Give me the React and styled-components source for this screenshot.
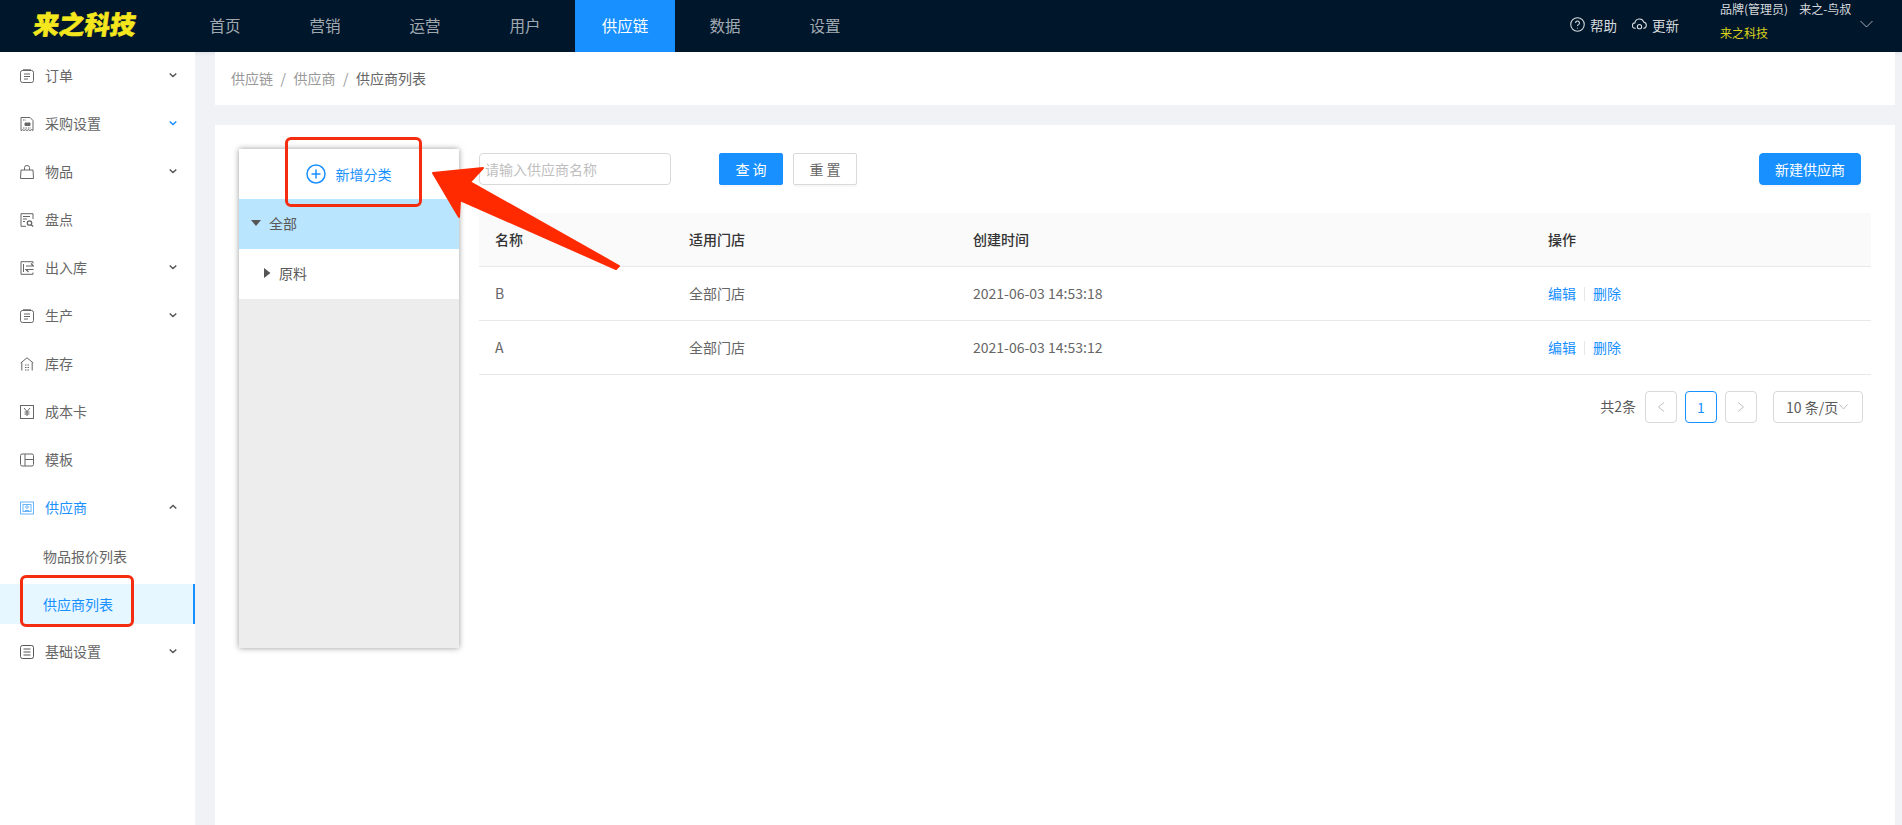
import React from 'react'
import styled, { createGlobalStyle } from 'styled-components'

const GlobalStyle = createGlobalStyle`
html, body {
    margin: 0;
    padding: 0;
    height: 100%;
    overflow: hidden;
    background: #f0f2f5;
    font-family: "Noto Sans CJK SC", "Noto Sans", sans-serif;
    font-size: 14px;
    color: #595959;
}
* { box-sizing: border-box; }
`;

const Page = styled.div`
position: relative;
width: 1902px;
height: 825px;
overflow: hidden;
`;

/* top bar */
const Header = styled.header`
display: flex;
align-items: stretch;
height: 52px;
background: #00162b;
color: rgba(255, 255, 255, 0.65);
box-shadow: 0 1px 4px rgba(0, 21, 41, 0.08);
`;

const Logo = styled.div`
width: 175px;
padding: 0 0 6px 34px;
display: flex;
align-items: center;
font-size: 25.5px;
font-weight: 900;
line-height: 1;
white-space: nowrap;
color: #f5e71d;
span {
    display: inline-block;
    transform: skewX(-8deg);
    -webkit-text-stroke: 0.6px #f5e71d;
}
`;

const TopNav = styled.nav`
display: flex;
`;

const TopNavItem = styled.div`
width: 100px;
display: flex;
align-items: center;
justify-content: center;
padding-bottom: 3px;
font-size: 15.5px;
color: ${p => (p.$active ? '#fff' : 'rgba(255, 255, 255, 0.65)')};
background: ${p => (p.$active ? '#1890ff' : 'transparent')};
`;

const HeaderRight = styled.div`
margin-left: auto;
display: flex;
align-items: center;
padding-right: 29px;
color: rgba(255, 255, 255, 0.85);
`;

const HeaderAction = styled.div`
display: flex;
align-items: center;
gap: 5px;
margin-right: 15px;
font-size: 13.5px;
padding-bottom: 3px;
`;

const UserBlock = styled.div`
width: 140px;
margin-left: 26px;
font-size: 12px;
display: flex;
flex-direction: column;
gap: 8px;
padding-bottom: 11px;
line-height: 16px;
`;

const UserLine = styled.div`
display: flex;
gap: 11px;
white-space: nowrap;
`;

const Company = styled.div`
color: #d8d21c;
`;

const Body = styled.div`
display: flex;
height: 773px;
`;

/* left menu */
const Sidebar = styled.aside`
width: 195px;
flex: none;
background: #fff;
`;

const MenuRow = styled.div`
height: 48px;
display: flex;
align-items: center;
padding: 0 18px 0 20px;
gap: 11px;
color: ${p => (p.$active ? '#1890ff' : '#666')};
`;

const MenuLabel = styled.span`
flex: 1;
line-height: 1;
font-size: 14px;
padding-bottom: 2px;
`;

const SubRow = styled.div`
height: ${p => p.$h}px;
margin-bottom: 4px;
display: flex;
align-items: center;
padding-left: 43px;
padding-bottom: 1px;
color: ${p => (p.$active ? '#1890ff' : '#666')};
background: ${p => (p.$active ? '#e6f7ff' : 'transparent')};
border-right: ${p => (p.$active ? '2px solid #1890ff' : 'none')};
`;

/* content column */
const Content = styled.main`
flex: 1;
min-width: 0;
padding: 0 7px 0 20px;
display: flex;
flex-direction: column;
gap: 20px;
`;

const Crumbs = styled.div`
flex: none;
height: 53px;
background: #fff;
display: flex;
align-items: center;
padding: 0 16px 1px;
color: #999;
`;

const CrumbSep = styled.span`
margin: 0 7.5px;
color: #999;
`;

const CrumbLast = styled.span`
color: #666;
`;

const Card = styled.section`
flex: 1;
background: #fff;
display: flex;
padding: 24px 24px 0;
`;

/* category tree */
const TreePanel = styled.div`
width: 220px;
height: 499px;
flex: none;
display: flex;
flex-direction: column;
background: #ededed;
box-shadow: 0 0 6px rgba(0, 0, 0, 0.4);
`;

const TreeHead = styled.div`
height: 50px;
background: #fff;
display: flex;
align-items: center;
justify-content: center;
gap: 10px;
padding-right: 1px;
color: #1890ff;
font-size: 14px;
`;

const TreeRow = styled.div`
height: 50px;
display: flex;
align-items: center;
gap: ${p => p.$gap}px;
padding-left: ${p => p.$indent}px;
padding-bottom: 2px;
font-size: 14px;
background: ${p => (p.$active ? '#bae5ff' : '#fff')};
`;

/* list side */
const ListPane = styled.div`
flex: 1;
min-width: 0;
margin-left: 20px;
padding-top: 4px;
margin-right: -2px;
`;

const Toolbar = styled.div`
display: flex;
align-items: center;
height: 32px;
margin-bottom: 28px;
`;

const SearchInput = styled.div`
width: 192px;
height: 32px;
border: 1px solid #d9d9d9;
border-radius: 4px;
padding: 0 5px;
display: flex;
align-items: center;
color: #bfbfbf;
font-size: 14px;
`;

const Button = styled.div`
height: 32px;
width: ${p => p.$w}px;
margin-left: ${p => p.$ml || 0}px;
margin-right: ${p => p.$mr || 0}px;
border-radius: ${p => (p.$round ? 4 : 2)}px;
display: flex;
align-items: center;
justify-content: center;
font-size: 14px;
background: ${p => (p.$primary ? '#1890ff' : '#fff')};
color: ${p => (p.$primary ? '#fff' : '#666')};
border: 1px solid ${p => (p.$primary ? '#1890ff' : '#d9d9d9')};
box-shadow: 0 2px 0 rgba(0, 0, 0, 0.03);
`;

const Spacer = styled.div`
flex: 1;
`;

const Table = styled.table`
width: 1392px;
border-collapse: collapse;
table-layout: fixed;
font-size: 14px;
`;

const Th = styled.th`
height: 53px;
padding: 0 16px 1px;
text-align: left;
font-weight: 500;
color: #333;
background: #fafafa;
border-bottom: 1px solid #e8e8e8;
width: ${p => p.$w}px;
`;

const Td = styled.td`
height: 54px;
padding: 0 16px 1px;
color: #666;
border-bottom: 1px solid #e8e8e8;
`;

const TextLink = styled.span`
color: #1890ff;
`;

const LinkDivider = styled.span`
display: inline-block;
width: 1px;
height: 14px;
margin: 0 8px;
vertical-align: -2px;
background: #e8e8e8;
`;

const Pagination = styled.div`
display: flex;
align-items: center;
justify-content: flex-end;
height: 32px;
margin: 16px 10px 0 0;
gap: 8px;
`;

const PageTotal = styled.span`
font-size: 14px;
margin-right: 1px;
padding-bottom: 2px;
`;

const PageBtn = styled.div`
width: 32px;
height: 32px;
display: flex;
align-items: center;
justify-content: center;
border-radius: 4px;
font-size: 14px;
border: 1px solid ${p => (p.$active ? '#1890ff' : '#d9d9d9')};
color: ${p => (p.$active ? '#1890ff' : '#bfbfbf')};
`;

const PageSize = styled.div`
width: 90px;
height: 32px;
margin-left: 8px;
display: flex;
align-items: center;
gap: 1px;
padding: 0 0 0 12px;
border: 1px solid #d9d9d9;
border-radius: 4px;
white-space: nowrap;
`;

/* red marks drawn on top of the screenshot */
const Mark = styled.div`
position: absolute;
left: ${p => p.$x}px;
top: ${p => p.$y}px;
width: ${p => p.$w}px;
height: ${p => p.$h}px;
border: 3px solid #f52d10;
border-radius: 6px;
`;

const ArrowMark = styled.svg`
position: absolute;
left: 0;
top: 0;
pointer-events: none;
`;

const Line = ({ children, size = 14, color = 'currentColor', sw = 1 }) => (
    <svg width={size} height={size} viewBox="0 0 14 14" fill="none" stroke={color} strokeWidth={sw} style={{ flex: 'none' }}>
        {children}
    </svg>
)

const icons = {
    clipboard: <><rect x="0.5" y="1.5" width="13" height="12" rx="2" /><path d="M3 0.8h8M4 5h6M4 7.5h6M4 10h4" /></>,
    receipt: <><path d="M1 .5h9l3 3v10l-1.5-.8-1.5.8-1.5-.8-1.5.8-1.5-.8-1.500.8-1.5-.8L1 13.5z" /><path d="M3 3h3M3 11h8" strokeDasharray="1.5 1" /><path d="M5 6h5v2.5H5z" fill="#666" /></>,
    bag: <><path d="M1 5h12l.5 8.5H.5z" /><path d="M4.5 5V2.5a2.5 2 0 0 1 5 0V5" /></>,
    search: <><path d="M13 6V.7H1v12.600h5" /><path d="M3 3.5h7M3 6h4M3 8.5h2" /><circle cx="9.5" cy="10" r="2.2" strokeWidth="1.3" /><path d="M11.2 11.7l2 1.8" strokeWidth="1.3" /></>,
    inout: <><path d="M13 2.500V.7H1v12.600h12v-1.800" /><path d="M3.5 3v8" /><path d="M6 5h7.500l-2.500-2.500M13.500 8.500H6l2.500 2.500" strokeWidth="1.2" /></>,
    house: <><path d="M.7 6L7 .8 13.3 6M1.8 5.5v8M12.2 5.5v8" /><path d="M5 8h4M5 10.5h4M5 13h4" strokeDasharray="1.5 1" /></>,
    yen: <><rect x="0.5" y="0.5" width="13" height="13" /><path d="M4 3l3 3.5L10 3M7 6.5V11M4.500 7h5M4.500 9h5" /></>,
    layout: <><rect x="0.5" y="1" width="13" height="12" rx="1.5" /><path d="M5 1v12M5 6.500h8.500" /></>,
    vendor: <><rect x="0.5" y="1" width="13" height="12" /><rect x="3" y="3.5" width="8" height="7" /><circle cx="7" cy="6" r="1.3" /><path d="M4.8 9.500h4.400" /></>,
    lines: <><rect x="0.5" y="0.5" width="13" height="13" rx="2" /><path d="M3.5 4h7M3.5 7h7M3.5 10h7" /></>,
}

const Chevron = ({ up, color = '#555' }) => (
    <svg width="8" height="6" viewBox="0 0 8 6" fill="none" stroke={color} strokeWidth="1.5" style={{ flex: 'none', marginBottom: 3 }}>
        <path d={up ? 'M.7 4.500L4 1.500l3.300 3' : 'M.7 1.500L4 4.500l3.300-3'} />
    </svg>
)

const Caret = ({ right }) => (
    <svg width="10" height="10" viewBox="0 0 10 10" fill="#555" style={{ flex: 'none' }}>
        <path d={right ? 'M2 0l6.500 5L2 10z' : 'M0 2h10L5 8z'} />
    </svg>
)

const menu = [
    { label: '订单', icon: 'clipboard', arrow: true },
    { label: '采购设置', icon: 'receipt', arrow: true, arrowColor: '#1890ff' },
    { label: '物品', icon: 'bag', arrow: true },
    { label: '盘点', icon: 'search' },
    { label: '出入库', icon: 'inout', arrow: true },
    { label: '生产', icon: 'clipboard', arrow: true },
    { label: '库存', icon: 'house' },
    { label: '成本卡', icon: 'yen' },
    { label: '模板', icon: 'layout' },
]

const rows = [
    { name: 'B', time: '2021-06-03 14:53:18' },
    { name: 'A', time: '2021-06-03 14:53:12' },
]

const App = () => {
    return (
        <Page>
            <GlobalStyle />
            <Header>
                <Logo><span>来之科技</span></Logo>
                <TopNav>
                    {['首页', '营销', '运营', '用户', '供应链', '数据', '设置'].map(t => (
                        <TopNavItem key={t} $active={t === '供应链'}>{t}</TopNavItem>
                    ))}
                </TopNav>
                <HeaderRight>
                    <HeaderAction>
                        <Line size={15}>
                            <circle cx="7" cy="7" r="6.3" />
                            <path d="M5.2 5.5a1.800 1.800 0 1 1 2.700 1.600c-.6.3-.9.7-.9 1.300M7 10v.8" />
                        </Line>
                        帮助
                    </HeaderAction>
                    <HeaderAction>
                        <Line size={15}>
                            <path d="M3.5 10.5H3a2.500 2.500 0 0 1-.3-5A4.300 4.300 0 0 1 11 4.800a2.900 2.900 0 0 1 0 5.700h-.5" />
                            <circle cx="7" cy="9" r="2" />
                        </Line>
                        更新
                    </HeaderAction>
                    <UserBlock>
                        <UserLine><span>品牌(管理员)</span><span>来之-鸟叔</span></UserLine>
                        <Company>来之科技</Company>
                    </UserBlock>
                    <svg width="13" height="8" viewBox="0 0 13 8" fill="none" stroke="rgba(255,255,255,.65)" strokeWidth="1" style={{ marginBottom: 4 }}><path d="M.5 1l6 6 6-6" /></svg>
                </HeaderRight>
            </Header>
            <Body>
                <Sidebar>
                    {menu.map(m => (
                        <MenuRow key={m.label}>
                            <Line color="#666">{icons[m.icon]}</Line>
                            <MenuLabel>{m.label}</MenuLabel>
                            {m.arrow && <Chevron color={m.arrowColor} />}
                        </MenuRow>
                    ))}
                    <MenuRow $active>
                        <Line color="#69b5fb">{icons.vendor}</Line>
                        <MenuLabel>供应商</MenuLabel>
                        <Chevron up />
                    </MenuRow>
                    <SubRow $h={48}>物品报价列表</SubRow>
                    <SubRow $h={40} $active>供应商列表</SubRow>
                    <MenuRow>
                        <Line color="#555">{icons.lines}</Line>
                        <MenuLabel>基础设置</MenuLabel>
                        <Chevron />
                    </MenuRow>
                </Sidebar>
                <Content>
                    <Crumbs>
                        供应链<CrumbSep>/</CrumbSep>供应商<CrumbSep>/</CrumbSep><CrumbLast>供应商列表</CrumbLast>
                    </Crumbs>
                    <Card>
                        <TreePanel>
                            <TreeHead>
                                <svg width="20" height="20" viewBox="0 0 20 20" fill="none" stroke="#1890ff" strokeWidth="1.5">
                                    <circle cx="10" cy="10" r="9" />
                                    <path d="M10 5.500v9M5.500 10h9" />
                                </svg>
                                新增分类
                            </TreeHead>
                            <TreeRow $active $indent={12} $gap={8}><Caret />全部</TreeRow>
                            <TreeRow $indent={23} $gap={7}><Caret right />原料</TreeRow>
                        </TreePanel>
                        <ListPane>
                            <Toolbar>
                                <SearchInput>请输入供应商名称</SearchInput>
                                <Button $primary $w={64} $ml={48}>查 询</Button>
                                <Button $w={64} $ml={10}>重 置</Button>
                                <Spacer />
                                <Button $primary $round $w={102} $mr={12}>新建供应商</Button>
                            </Toolbar>
                            <Table>
                                <thead>
                                    <tr>
                                        <Th $w={194}>名称</Th>
                                        <Th $w={284}>适用门店</Th>
                                        <Th $w={575}>创建时间</Th>
                                        <Th $w={339}>操作</Th>
                                    </tr>
                                </thead>
                                <tbody>
                                    {rows.map(r => (
                                        <tr key={r.name}>
                                            <Td>{r.name}</Td>
                                            <Td>全部门店</Td>
                                            <Td>{r.time}</Td>
                                            <Td><TextLink>编辑</TextLink><LinkDivider /><TextLink>删除</TextLink></Td>
                                        </tr>
                                    ))}
                                </tbody>
                            </Table>
                            <Pagination>
                                <PageTotal>共2条</PageTotal>
                                <PageBtn>
                                    <svg width="8" height="10" viewBox="0 0 8 10" fill="none" stroke="#bfbfbf"><path d="M7 .5L1.5 5 7 9.500" /></svg>
                                </PageBtn>
                                <PageBtn $active>1</PageBtn>
                                <PageBtn>
                                    <svg width="8" height="10" viewBox="0 0 8 10" fill="none" stroke="#bfbfbf"><path d="M1 .5L6.500 5 1 9.500" /></svg>
                                </PageBtn>
                                <PageSize>
                                    10 条/页
                                    <svg width="9" height="6" viewBox="0 0 9 6" fill="none" stroke="#bfbfbf"><path d="M.5.5l4 4.500 4-4.500" /></svg>
                                </PageSize>
                            </Pagination>
                        </ListPane>
                    </Card>
                </Content>
            </Body>
            <Mark $x={285} $y={137} $w={137} $h={70} />
            <Mark $x={20} $y={575} $w={114} $h={52} />
            <ArrowMark width="1902" height="825">
                <path
                    d="M433 173L483 168L470 182L619 266L616 269L460 200L459 217Z"
                    fill="#ff2a00"
                    stroke="#ff2a00"
                    strokeWidth="2"
                    strokeLinejoin="round"
                />
            </ArrowMark>
        </Page>
    )
}

export default App;
